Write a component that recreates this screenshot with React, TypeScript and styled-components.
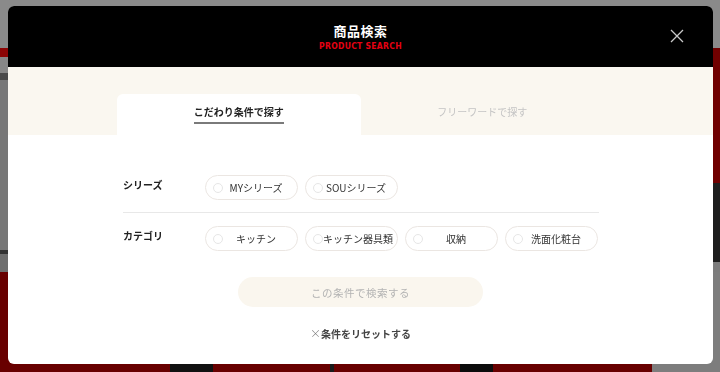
import styled, { createGlobalStyle } from "styled-components";

const GlobalStyle = createGlobalStyle`
  html, body {
    margin: 0;
    padding: 0;
    width: 720px;
    height: 372px;
    overflow: hidden;
    font-family: "Noto Sans CJK JP", "Noto Sans", sans-serif;
  }
  * {
    box-sizing: border-box;
  }
`;

const seriesOptions = ["MYシリーズ", "SOUシリーズ"];
const categoryOptions = ["キッチン", "キッチン器具類", "収納", "洗面化粧台"];

const App = () => {
  return (
    <>
      <GlobalStyle />
      <Backdrop>
        <TopBand />
        <MiddleBand>
          <MiddleLeft>
            <Stripe $h={9} $c="#8c0505" />
            <Stripe $h={16} $c="#878787" />
            <Stripe $h={7} $c="#4a4a4a" />
            <Stripe $h={170} $c="#777777" />
            <Stripe $h={4} $c="#333333" />
            <Stripe $h={18} $c="#6e6e6e" />
          </MiddleLeft>
          <MiddleRight>
            <Stripe $h={135} $c="#700000" />
            <Stripe $h={79} $c="#1e1e1e" />
            <Stripe $h={10} $c="#7c7c7c" />
          </MiddleRight>
        </MiddleBand>
        <BottomBand>
          <Block $w={170} $c="#680000" />
          <Block $w={43} $c="#111111" />
          <Block $w={117} $c="#680000" />
          <Block $w={4} $c="#1a1a1a" />
          <Block $w={126} $c="#680000" />
          <Block $w={33} $c="#0c0c0c" />
          <Block $w={159} $c="#680000" />
          <Block $w={68} $c="#7d7d7d" />
        </BottomBand>
      </Backdrop>

      <Modal>
        <Header>
          <TitleJa>商品検索</TitleJa>
          <TitleEn>PRODUCT SEARCH</TitleEn>
          <CloseButton aria-label="close">
            <svg width="14" height="14" viewBox="0 0 14 14">
              <path d="M1 1L13 13M13 1L1 13" stroke="#c9c9c9" strokeWidth="1.3" fill="none" />
            </svg>
          </CloseButton>
        </Header>

        <TabsArea>
          <Tabs>
            <Tab $active>
              <TabLabel $active>こだわり条件で探す</TabLabel>
            </Tab>
            <Tab>
              <TabLabel>フリーワードで探す</TabLabel>
            </Tab>
          </Tabs>
        </TabsArea>

        <Body>
          <Conditions>
            <ConditionRow>
              <RowLabel>シリーズ</RowLabel>
              <Options>
                {seriesOptions.map((o) => (
                  <Pill key={o}>
                    <Radio />
                    <PillText>{o}</PillText>
                  </Pill>
                ))}
              </Options>
            </ConditionRow>
            <Divider />
            <ConditionRow>
              <RowLabel>カテゴリ</RowLabel>
              <Options>
                {categoryOptions.map((o) => (
                  <Pill key={o}>
                    <Radio />
                    <PillText>{o}</PillText>
                  </Pill>
                ))}
              </Options>
            </ConditionRow>
          </Conditions>

          <SearchButton>この条件で検索する</SearchButton>
          <ResetLink>
            <ResetMark>×</ResetMark>条件をリセットする
          </ResetLink>
        </Body>
      </Modal>
    </>
  );
};
export default App;

const Backdrop = styled.div`
  width: 720px;
  height: 372px;
  display: flex;
  flex-direction: column;
  background: #777;
`;

const TopBand = styled.div`
  height: 48px;
  background: #8a8a8a;
`;

const MiddleBand = styled.div`
  height: 224px;
  display: flex;
`;

const MiddleLeft = styled.div`
  flex: 1;
  display: flex;
  flex-direction: column;
`;

const MiddleRight = styled.div`
  width: 60px;
  display: flex;
  flex-direction: column;
`;

const Stripe = styled.div<{ $h: number; $c: string }>`
  height: ${({ $h }) => $h}px;
  background: ${({ $c }) => $c};
`;

const BottomBand = styled.div`
  flex: 1;
  display: flex;
`;

const Block = styled.div<{ $w: number; $c: string }>`
  width: ${({ $w }) => $w}px;
  background: ${({ $c }) => $c};
`;

const Modal = styled.div`
  position: fixed;
  top: 6px;
  left: 8px;
  width: 705px;
  height: 358px;
  border-radius: 6px;
  overflow: hidden;
  background: #ffffff;
  display: flex;
  flex-direction: column;
`;

const Header = styled.div`
  position: relative;
  height: 61px;
  background: #000;
  display: flex;
  flex-direction: column;
  align-items: center;
  justify-content: center;
  padding-top: 1px;
`;

const TitleJa = styled.div`
  color: #fff;
  font-size: 13px;
  font-weight: 700;
  line-height: 16px;
  letter-spacing: 0.5px;
`;

const TitleEn = styled.div`
  color: #e60012;
  font-family: "DejaVu Sans Condensed", "DejaVu Sans", sans-serif;
  font-size: 8.5px;
  font-weight: 700;
  line-height: 12px;
  letter-spacing: 0.3px;
  margin-top: 1px;
`;

const CloseButton = styled.button`
  position: absolute;
  right: 29px;
  top: 23px;
  width: 14px;
  height: 14px;
  padding: 0;
  border: none;
  background: none;
  display: flex;
`;

const TabsArea = styled.div`
  background: #faf7f0;
  padding-top: 27px;
  display: flex;
  justify-content: center;
`;

const Tabs = styled.div`
  width: 487px;
  display: grid;
  grid-template-columns: 1fr 1fr;
`;

const Tab = styled.div<{ $active?: boolean }>`
  height: 41px;
  border-radius: 6px 6px 0 0;
  background: ${({ $active }) => ($active ? "#ffffff" : "transparent")};
  display: flex;
  justify-content: center;
  padding-top: 9px;
`;

const TabLabel = styled.div<{ $active?: boolean }>`
  height: 21px;
  font-size: 10px;
  line-height: 17px;
  font-weight: ${({ $active }) => ($active ? 700 : 400)};
  color: ${({ $active }) => ($active ? "#222" : "#c4c4c4")};
  border-bottom: 2px solid ${({ $active }) => ($active ? "#7a7a7a" : "transparent")};
`;

const Body = styled.div`
  flex: 1;
  display: flex;
  flex-direction: column;
  align-items: center;
  padding-top: 40px;
`;

const Conditions = styled.div`
  width: 476px;
  margin-left: 1px;
  display: flex;
  flex-direction: column;
`;

const ConditionRow = styled.div`
  display: flex;
  align-items: center;
`;

const RowLabel = styled.div`
  width: 82px;
  font-size: 10px;
  font-weight: 700;
  color: #222;
  margin-top: -7px;
`;

const Options = styled.div`
  display: flex;
  gap: 7px;
`;

const Pill = styled.div`
  width: 93px;
  height: 25px;
  border: 1px solid #ebe6e2;
  border-radius: 13px;
  display: flex;
  align-items: center;
  padding-left: 7px;
`;

const Radio = styled.span`
  width: 10px;
  height: 10px;
  border-radius: 50%;
  border: 1px solid #e6e6e6;
  flex-shrink: 0;
`;

const PillText = styled.span`
  flex: 1;
  text-align: center;
  font-size: 10px;
  color: #333;
  padding-right: 8px;
  white-space: nowrap;
`;

const Divider = styled.div`
  height: 1px;
  background: #e8e8e8;
  margin: 12px 0 13px;
`;

const SearchButton = styled.button`
  margin-top: 26px;
  width: 245px;
  height: 30px;
  border: none;
  border-radius: 15px;
  background: #faf6ee;
  color: #b3b3b3;
  font-family: inherit;
  font-size: 10.5px;
  letter-spacing: 0.5px;
`;

const ResetLink = styled.div`
  margin-top: 18px;
  font-size: 10px;
  font-weight: 700;
  color: #444;
  display: flex;
  align-items: center;
`;

const ResetMark = styled.span`
  font-weight: 300;
  color: #777;
  font-size: 11px;
`;
